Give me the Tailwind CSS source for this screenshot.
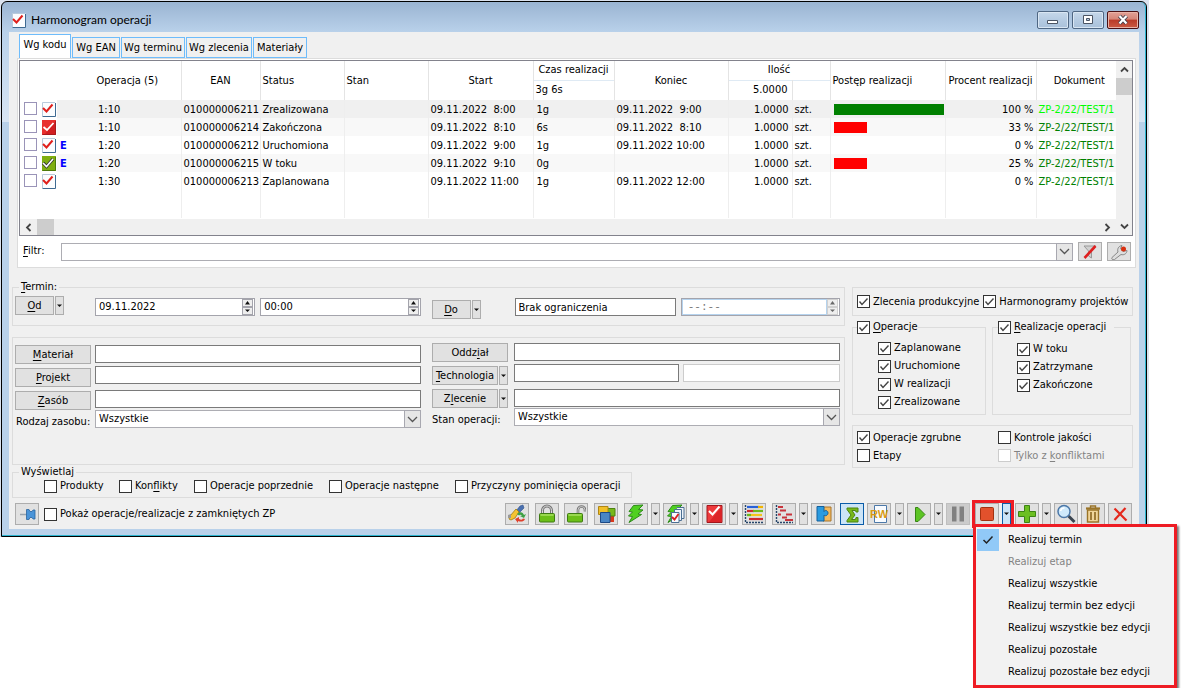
<!DOCTYPE html>
<html lang="pl">
<head>
<meta charset="utf-8">
<title>Harmonogram operacji</title>
<script src="https://cdn.jsdelivr.net/npm/@tailwindcss/browser@4"></script>
</head>
<body class="min-h-screen bg-white font-['DejaVu_Sans_Condensed','Noto_Sans',sans-serif] text-[11px] leading-[14px] text-black">
<svg class="hidden" aria-hidden="true">
  <symbol id="tick" viewBox="0 0 13 13"><path d="M2.500 6.500 5 9.500 10.500 3.500" fill="none" stroke="#444" stroke-width="1.4"/></symbol>
  <symbol id="caret" viewBox="0 0 7 4"><path d="M1 .5h5L3.500 3z" fill="#111"/></symbol>
  <symbol id="up" viewBox="0 0 7 4"><path d="M1 3.500h5L3.500 0z" fill="#111"/></symbol>
  <symbol id="chev" viewBox="0 0 11 7"><path d="M1 1l4.500 4.500L10 1" fill="none" stroke="#555" stroke-width="1.300"/></symbol>
  <symbol id="page" viewBox="0 0 14 15"><path d="M.5.500h13v14H.500z" fill="#fbfdff"/><path d="M13.500 1v13.500H.500" fill="none" stroke="#3e6a92"/><path d="M.5 14V.500H13" fill="none" stroke="#b9cbdc"/><path d="M1 6l3.500 3.500L10.500 2.500" fill="none" stroke="#e0201c" stroke-width="2"/></symbol>
  <symbol id="pagered" viewBox="0 0 14 15"><path d="M0 0h14v15H0z" fill="#e8302f"/><path d="M13.500 1v13.500H.500" fill="none" stroke="#a81a1e"/><path d="M13 2v12H3z" fill="#d11f22"/><path d="M1.500 7L5 10 11.500 3" fill="none" stroke="#fff" stroke-width="1.800"/></symbol>
  <symbol id="pagegreen" viewBox="0 0 14 15"><path d="M0 0h14v15H0z" fill="#7fae10"/><path d="M13.500 1v13.500H.500" fill="none" stroke="#4d7a0c"/><path d="M1 7l3.500 3.500L11 3" fill="none" stroke="#333" stroke-width="3.200"/><path d="M1 7l3.500 3.500L11 3" fill="none" stroke="#fff" stroke-width="1.600"/></symbol>
  <symbol id="bolt" viewBox="0 0 20 20"><path d="M7.500 1.500 17 1l-4.500 4.500 4.500.5-5 4 3.500.5L3 18.500l3.500-6-4-.5 4-4-3.500-.5z" fill="#4fd020" stroke="#2c8a18"/></symbol>
</svg>

<div class="mr-8 bg-[#dbe2ee] pt-px pl-px pr-0.5">
<main class="rounded-t-md border border-black bg-[linear-gradient(#9ab4d2,#b9d1ea_30px,#d8e5f4_120px,#b9d1ea_120px)]">
<div class="rounded-t-md border-r border-b border-[#2bb4cf] pr-1.5 pb-1.5 pl-[7px]">

  <header class="flex h-[30px] items-center pl-[3px] pt-1.5 font-[Lato,'Open_Sans',sans-serif] text-xs">
    <svg class="h-[15px] w-3.5"><use href="#page"/></svg>
    <h1 class="ml-[5px]">Harmonogram operacji</h1>
    <div class="ml-auto flex gap-[3px] pb-px">
      <button aria-label="Minimalizuj" class="grid h-[18px] w-8 place-items-center rounded-xs border border-[#4f6783] bg-linear-to-b from-[#c6d8ea] via-[#b5cbe2] to-[#a9c1da] shadow-[inset_0_0_0_1px_#d9e6f3]"><svg class="h-3 w-3"><path d="M.5 6.500h10v3H.500z" fill="#fff" stroke="#4b5463"/></svg></button>
      <button aria-label="Maksymalizuj" class="grid h-[18px] w-8 place-items-center rounded-xs border border-[#4f6783] bg-linear-to-b from-[#c6d8ea] via-[#b5cbe2] to-[#a9c1da] shadow-[inset_0_0_0_1px_#d9e6f3]"><svg class="h-3 w-3"><path d="M1.500 1.500h9v8h-9z" fill="#fff" stroke="#4b5463"/><path d="M4.500 4.500h3v2h-3z" fill="#b5cbe2" stroke="#4b5463"/></svg></button>
      <button aria-label="Zamknij" class="grid h-[18px] w-8 place-items-center rounded-xs border border-[#4a1013] bg-[linear-gradient(#e2a196,#d58577_45%,#b93a27_50%,#cb5a43)] shadow-[inset_0_0_0_1px_#e9b3a7]"><svg class="h-3 w-3"><path d="M2.500 2 9.500 9.500M9.500 2 2.500 9.500" stroke="#3f3f4c" stroke-width="4"/><path d="M2.500 2 9.500 9.500M9.500 2 2.500 9.500" stroke="#fff" stroke-width="2.200"/></svg></button>
    </div>
  </header>

  <div class="bg-[#f0f0f0] pb-1 [&_label]:flex [&_label]:items-center [&_label]:whitespace-nowrap [&_input[type=checkbox]]:size-[13px] [&_input[type=checkbox]]:appearance-none [&_input[type=checkbox]]:border [&_input[type=checkbox]]:border-[#333] [&_input[type=checkbox]]:bg-white [&_input[type=checkbox]]:disabled:border-[#ccc] [&_u]:underline-offset-2">

    <nav class="flex items-end gap-px pt-0.5 pl-2.5" role="tablist">
      <button role="tab" aria-selected="true" class="h-6 w-[52px] border border-b-0 border-[#6ebcfb] bg-white pb-1">Wg kodu</button>
      <button role="tab" class="h-[21px] w-12 border border-[#6ebcfb]">Wg EAN</button>
      <button role="tab" class="h-[21px] w-16 border border-[#6ebcfb]">Wg terminu</button>
      <button role="tab" class="h-[21px] w-[66px] border border-[#6ebcfb]">Wg zlecenia</button>
      <button role="tab" class="h-[21px] w-[54px] border border-[#6ebcfb]">Materiały</button>
    </nav>

    <section class="mr-[3px] ml-2 border border-[#dcdcdc] bg-white p-px pr-0.5 pb-1.5">
      <div class="flex border border-[#82828c]">
        <div class="min-w-0 flex-1">
          <table class="w-full table-fixed border-collapse [&_td]:overflow-hidden [&_td]:border-r [&_td]:border-[#eee] [&_td]:pt-0.5 [&_td]:whitespace-pre [&_td:has(svg)]:pt-0 [&_td:has([style])]:pt-0 [&_th]:border-r [&_th]:border-[#e4e4e4] [&_th]:font-normal">
            <colgroup><col class="w-[37px]"><col class="w-[124px]"><col class="w-[79px]"><col class="w-[84px]"><col class="w-[84px]"><col class="w-[105px]"><col class="w-[81px]"><col class="w-[114px]"><col class="w-16"><col class="w-[38px]"><col class="w-[115px]"><col class="w-[91px]"><col></colgroup>
            <thead>
              <tr class="h-[19px]">
                <th rowspan="2" colspan="2" class="pl-[54px]">Operacja (5)</th>
                <th rowspan="2">EAN</th>
                <th rowspan="2" class="pl-0.5 text-left">Status</th>
                <th rowspan="2" class="pl-0.5 text-left">Stan</th>
                <th rowspan="2">Start</th>
                <th>Czas realizacji</th>
                <th rowspan="2">Koniec</th>
                <th colspan="2">Ilość</th>
                <th rowspan="2" class="pl-0.5 text-left whitespace-nowrap">Postęp realizacji</th>
                <th rowspan="2" class="whitespace-nowrap">Procent realizacji</th>
                <th rowspan="2" class="border-r-0! pl-1.5">Dokument</th>
              </tr>
              <tr class="h-5">
                <th class="border-t border-t-[#dfeaf4]! pl-0.5 text-left">3g 6s</th>
                <th class="border-t border-t-[#dfeaf4]! pr-1 text-right">5.0000</th>
                <th class="border-t border-t-[#dfeaf4]!"></th>
              </tr>
            </thead>
            <tbody>
              <tr class="h-[18px] bg-[#f0f0f0]">
                <td class="border-r-0! bg-white"><div class="flex gap-[5px] pl-1"><input type="checkbox" aria-label="Zaznacz 010000006211" class="border-[#9a94b8]!"><svg class="h-[15px] w-3.5"><use href="#page"/></svg></div></td>
                <td class="pl-[41px]">1:10</td><td class="pl-0.5">010000006211</td><td class="pl-0.5">Zrealizowana</td><td></td><td class="pl-0.5">09.11.2022  8:00</td><td class="pl-[3px]">1g</td><td class="pl-0.5">09.11.2022  9:00</td><td class="pr-[3px] text-right">1.0000</td><td class="pl-0.5">szt.</td>
                <td class="pl-[3px]"><div class="h-[11px] bg-[#008000]" style="width:110px"></div></td><td class="pr-0.5 text-right">100 %</td><td class="border-r-0! pl-0.5 text-[#00ff00]">ZP-2/22/TEST/1</td>
              </tr>
              <tr class="h-[18px] bg-[#f8f8f8]">
                <td class="border-r-0! bg-white"><div class="flex gap-[5px] pl-1"><input type="checkbox" aria-label="Zaznacz 010000006214" class="border-[#9a94b8]!"><svg class="h-[15px] w-3.5"><use href="#pagered"/></svg></div></td>
                <td class="pl-[41px]">1:10</td><td class="pl-0.5">010000006214</td><td class="pl-0.5">Zakończona</td><td></td><td class="pl-0.5">09.11.2022  8:10</td><td class="pl-[3px]">6s</td><td class="pl-0.5">09.11.2022  8:10</td><td class="pr-[3px] text-right">1.0000</td><td class="pl-0.5">szt.</td>
                <td class="pl-[3px]"><div class="h-[11px] bg-[#ff0000]" style="width:33px"></div></td><td class="pr-0.5 text-right">33 %</td><td class="border-r-0! pl-0.5 text-[#008000]">ZP-2/22/TEST/1</td>
              </tr>
              <tr class="h-[18px]">
                <td class="border-r-0! bg-white"><div class="flex gap-[5px] pl-1"><input type="checkbox" aria-label="Zaznacz 010000006212" class="border-[#9a94b8]!"><svg class="h-[15px] w-3.5"><use href="#page"/></svg></div></td>
                <td class="pl-[3px]"><div class="flex"><b class="w-[38px] text-[#0000ff]">E</b>1:20</div></td><td class="pl-0.5">010000006212</td><td class="pl-0.5">Uruchomiona</td><td></td><td class="pl-0.5">09.11.2022  9:00</td><td class="pl-[3px]">1g</td><td class="pl-0.5">09.11.2022 10:00</td><td class="pr-[3px] text-right">1.0000</td><td class="pl-0.5">szt.</td>
                <td></td><td class="pr-0.5 text-right">0 %</td><td class="border-r-0! pl-0.5 text-[#008000]">ZP-2/22/TEST/1</td>
              </tr>
              <tr class="h-[18px] bg-[#f8f8f8]">
                <td class="border-r-0! bg-white"><div class="flex gap-[5px] pl-1"><input type="checkbox" aria-label="Zaznacz 010000006215" class="border-[#9a94b8]!"><svg class="h-[15px] w-3.5"><use href="#pagegreen"/></svg></div></td>
                <td class="pl-[3px]"><div class="flex"><b class="w-[38px] text-[#0000ff]">E</b>1:20</div></td><td class="pl-0.5">010000006215</td><td class="pl-0.5">W toku</td><td></td><td class="pl-0.5">09.11.2022  9:10</td><td class="pl-[3px]">0g</td><td class="pl-0.5"></td><td class="pr-[3px] text-right">1.0000</td><td class="pl-0.5">szt.</td>
                <td class="pl-[3px]"><div class="h-[11px] bg-[#ff0000]" style="width:33px"></div></td><td class="pr-0.5 text-right">25 %</td><td class="border-r-0! pl-0.5 text-[#008000]">ZP-2/22/TEST/1</td>
              </tr>
              <tr class="h-[18px]">
                <td class="border-r-0! bg-white"><div class="flex gap-[5px] pl-1"><input type="checkbox" aria-label="Zaznacz 010000006213" class="border-[#9a94b8]!"><svg class="h-[15px] w-3.5"><use href="#page"/></svg></div></td>
                <td class="pl-[41px]">1:30</td><td class="pl-0.5">010000006213</td><td class="pl-0.5">Zaplanowana</td><td></td><td class="pl-0.5">09.11.2022 11:00</td><td class="pl-[3px]">1g</td><td class="pl-0.5">09.11.2022 12:00</td><td class="pr-[3px] text-right">1.0000</td><td class="pl-0.5">szt.</td>
                <td></td><td class="pr-0.5 text-right">0 %</td><td class="border-r-0! pl-0.5 text-[#008000]">ZP-2/22/TEST/1</td>
              </tr>
              <tr class="h-7"><td class="border-r-0!"></td><td></td><td></td><td></td><td></td><td></td><td></td><td></td><td></td><td></td><td></td><td></td><td class="border-r-0!"></td></tr>
            </tbody>
          </table>
          <div class="mt-px flex h-4 items-stretch justify-between bg-[#f0f0f0]">
            <div class="flex">
              <button aria-label="Przewiń w lewo" class="grid w-[17px] place-items-center"><svg class="h-[7px] w-[11px] rotate-90" viewBox="0 0 11 7"><path d="M2 1.500 5.500 5 9 1.500" fill="none" stroke="#444" stroke-width="1.800"/></svg></button>
              <div class="w-[17px] bg-[#cdcdcd]"></div>
            </div>
            <button aria-label="Przewiń w prawo" class="grid w-[17px] place-items-center"><svg class="h-[7px] w-[11px] -rotate-90" viewBox="0 0 11 7"><path d="M2 1.500 5.500 5 9 1.500" fill="none" stroke="#444" stroke-width="1.800"/></svg></button>
          </div>
        </div>
        <div class="flex w-4 flex-col bg-[#f0f0f0]">
          <button aria-label="Przewiń w górę" class="grid h-[17px] place-items-center"><svg class="h-[7px] w-[11px] rotate-180" viewBox="0 0 11 7"><path d="M2 1.500 5.500 5 9 1.500" fill="none" stroke="#444" stroke-width="1.800"/></svg></button>
          <div class="h-[17px] bg-[#cdcdcd]"></div>
          <button aria-label="Przewiń w dół" class="mt-auto grid h-[17px] place-items-center"><svg class="h-[7px] w-[11px]" viewBox="0 0 11 7"><path d="M2 1.500 5.500 5 9 1.500" fill="none" stroke="#444" stroke-width="1.800"/></svg></button>
        </div>
      </div>

      <div class="mt-1.5 flex items-center pr-0.5 pl-1">
        <label for="filtr" class="w-[38px] pb-0.5"><span><u>F</u>iltr:</span></label>
        <div class="grid flex-1">
          <select id="filtr" class="col-start-1 row-start-1 h-[18px] w-full appearance-none border border-[#adadb3] bg-white"><option></option></select>
          <span class="pointer-events-none col-start-1 row-start-1 grid w-[17px] place-items-center justify-self-end border border-[#a8a8b0] bg-[#e6e6e6]"><svg class="h-[7px] w-[11px]"><use href="#chev"/></svg></span>
        </div>
        <button aria-label="Wyczyść filtr" class="ml-[5px] grid h-[19px] w-6 place-items-center border border-[#adadad] bg-[#e1e1e1]"><svg class="h-4 w-5" viewBox="0 0 20 16"><path d="M4 2h12l-4.500 5v7l-3-2V7z" fill="#d0d0d0" stroke="#999"/><path d="M15.500 2 4.500 14" stroke="#df2020" stroke-width="2.600"/></svg></button>
        <button aria-label="Kreator filtra" class="ml-[5px] grid h-[19px] w-6 place-items-center border border-[#adadad] bg-[#e1e1e1]"><svg class="h-4 w-5" viewBox="0 0 20 16"><path d="M3 13.500 9 8C8 5 9.500 2 13 1.500L11.500 4.500 14 7.500l4-1c0 3-3 5-6 4l-6.500 5c-2 .5-3.500-.5-2.500-2z" fill="#ddd" stroke="#888"/><circle cx="14.500" cy="5" r="2.500" fill="#d83010"/></svg></button>
      </div>
    </section>

    <div class="mt-3 flex items-start gap-[7px] pr-1.5 pl-[3px]">
      <div class="min-w-0 flex-1">
        <fieldset class="border border-[#dcdcdc] pb-1.5">
          <legend class="ml-1.5 px-0.5"><u>T</u>ermin:</legend>
          <div class="flex items-start pt-0.5 pr-1 pl-0.5">
            <div class="flex w-20 gap-px">
              <button class="h-[19px] w-[39px] border border-[#adadad] bg-[#e1e1e1]"><u>O</u>d</button>
              <button aria-label="Opcje Od" class="grid h-[19px] w-[9px] place-items-center border border-[#adadad] bg-[#e1e1e1]"><svg class="h-1 w-[7px]"><use href="#caret"/></svg></button>
            </div>
            <div class="mt-0.5 flex flex-1 gap-[5px]">
              <div class="flex h-[18px] flex-1 border border-[#a4a4ac] bg-white pr-px">
                <input aria-label="Data od" value="09.11.2022" class="w-0 flex-1 pl-[3px] outline-none">
                <div class="flex w-[11px] flex-col"><button aria-label="Więcej" class="grid h-2 place-items-center border border-[#a4a4ac] bg-[#eee]"><svg class="h-1 w-[7px]"><use href="#up"/></svg></button><button aria-label="Mniej" class="grid h-2 place-items-center border border-[#a4a4ac] bg-[#eee]"><svg class="h-1 w-[7px]"><use href="#caret"/></svg></button></div>
              </div>
              <div class="flex h-[18px] flex-1 border border-[#a4a4ac] bg-white pr-px">
                <input aria-label="Godzina od" value="00:00" class="w-0 flex-1 pl-[3px] outline-none">
                <div class="flex w-[11px] flex-col"><button aria-label="Więcej" class="grid h-2 place-items-center border border-[#a4a4ac] bg-[#eee]"><svg class="h-1 w-[7px]"><use href="#up"/></svg></button><button aria-label="Mniej" class="grid h-2 place-items-center border border-[#a4a4ac] bg-[#eee]"><svg class="h-1 w-[7px]"><use href="#caret"/></svg></button></div>
              </div>
            </div>
            <div class="mt-1 ml-[11px] flex w-[83px] gap-px">
              <button class="h-[19px] w-[39px] border border-[#adadad] bg-[#e1e1e1]"><u>D</u>o</button>
              <button aria-label="Opcje Do" class="grid h-[19px] w-[9px] place-items-center border border-[#adadad] bg-[#e1e1e1]"><svg class="h-1 w-[7px]"><use href="#caret"/></svg></button>
            </div>
            <div class="mt-0.5 flex flex-1 gap-[5px]">
              <input aria-label="Data do" value="Brak ograniczenia" class="h-[18px] w-0 flex-1 border border-[#7a7a7a] bg-white pl-[3px]">
              <div class="flex h-[18px] flex-1 border border-[#a4a4ac] bg-white pr-px">
                <input aria-label="Godzina do" value="--:--" class="w-0 flex-1 border border-[#b5d3ee] pl-[5px] font-['Liberation_Mono',monospace] text-[#777] outline-none">
                <div class="flex w-[11px] flex-col"><button aria-label="Więcej" class="grid h-2 place-items-center border border-[#d0d0d0] bg-[#eee]"><svg class="h-1 w-[7px] opacity-60"><use href="#up"/></svg></button><button aria-label="Mniej" class="grid h-2 place-items-center border border-[#d0d0d0] bg-[#eee]"><svg class="h-1 w-[7px] opacity-60"><use href="#caret"/></svg></button></div>
              </div>
            </div>
          </div>
        </fieldset>

        <div class="mt-[11px] flex h-32 items-start border border-[#dcdcdc] pt-[5px] pr-1 pl-0.5 [&_input]:h-[18px] [&_input]:border [&_input]:border-[#7a7a7a] [&_input]:bg-white">
          <div class="mt-0.5 flex w-20 flex-col gap-1 pr-1">
            <button class="h-[19px] border border-[#adadad] bg-[#e1e1e1]"><u>M</u>ateriał</button>
            <button class="h-[19px] border border-[#adadad] bg-[#e1e1e1]"><u>P</u>rojekt</button>
            <button class="h-[19px] border border-[#adadad] bg-[#e1e1e1]"><u>Z</u>asób</button>
            <label for="rodzaj" class="mt-px ml-px">Rodzaj zasobu:</label>
          </div>
          <div class="mt-0.5 flex flex-1 flex-col">
            <input aria-label="Materiał">
            <input aria-label="Projekt" class="mt-[3px]">
            <input aria-label="Zasób" class="mt-1.5">
            <div class="mt-0.5 grid">
              <select id="rodzaj" class="col-start-1 row-start-1 h-[18px] appearance-none border border-[#adadb3] bg-white pl-[3px]"><option>Wszystkie</option></select>
              <span class="pointer-events-none col-start-1 row-start-1 grid w-[17px] place-items-center justify-self-end border border-[#a8a8b0] bg-[#e6e6e6]"><svg class="h-[7px] w-[11px]"><use href="#chev"/></svg></span>
            </div>
          </div>
          <div class="ml-[11px] flex w-[82px] flex-col gap-1 pr-1.5">
            <button class="h-[19px] border border-[#adadad] bg-[#e1e1e1]">Oddz<u>i</u>ał</button>
            <div class="flex gap-px"><button class="h-[19px] flex-1 border border-[#adadad] bg-[#e1e1e1]"><u>T</u>echnologia</button><button aria-label="Opcje technologii" class="grid h-[19px] w-[9px] place-items-center border border-[#adadad] bg-[#e1e1e1]"><svg class="h-1 w-[7px]"><use href="#caret"/></svg></button></div>
            <div class="flex gap-px"><button class="h-[19px] flex-1 border border-[#adadad] bg-[#e1e1e1]">Z<u>l</u>ecenie</button><button aria-label="Opcje zlecenia" class="grid h-[19px] w-[9px] place-items-center border border-[#adadad] bg-[#e1e1e1]"><svg class="h-1 w-[7px]"><use href="#caret"/></svg></button></div>
            <label for="stan" class="mt-px">Stan operacji:</label>
          </div>
          <div class="flex flex-1 flex-col">
            <input aria-label="Oddział">
            <div class="mt-[3px] flex gap-1"><input aria-label="Technologia" class="w-0 flex-[21]"><input aria-label="Nazwa technologii" disabled class="w-0 flex-[20] border-[#ccc]!"></div>
            <input aria-label="Zlecenie" class="mt-[7px]">
            <div class="mt-px grid">
              <select id="stan" class="col-start-1 row-start-1 h-[18px] appearance-none border border-[#adadb3] bg-white pl-[3px]"><option>Wszystkie</option></select>
              <span class="pointer-events-none col-start-1 row-start-1 grid w-[17px] place-items-center justify-self-end border border-[#a8a8b0] bg-[#e6e6e6]"><svg class="h-[7px] w-[11px]"><use href="#chev"/></svg></span>
            </div>
          </div>
        </div>
      </div>

      <div class="mt-[7px] w-[281px] [&_label]:h-[18px] [&_label]:gap-[3px]">
        <div class="flex h-[29px] items-center gap-1 border border-[#dcdcdc] pl-1">
          <label><span class="grid"><input type="checkbox" checked class="peer col-start-1 row-start-1"><svg class="pointer-events-none invisible col-start-1 row-start-1 size-[13px] peer-checked:visible"><use href="#tick"/></svg></span>Zlecenia produkcyjne</label>
          <label><span class="grid"><input type="checkbox" checked class="peer col-start-1 row-start-1"><svg class="pointer-events-none invisible col-start-1 row-start-1 size-[13px] peer-checked:visible"><use href="#tick"/></svg></span>Harmonogramy projektów</label>
        </div>
        <div class="mt-0.5 flex gap-1.5 pr-0.5">
          <fieldset class="h-[97px] w-[134px] border border-[#dcdcdc]">
            <legend class="ml-1"><label><span class="grid"><input type="checkbox" checked class="peer col-start-1 row-start-1"><svg class="pointer-events-none invisible col-start-1 row-start-1 size-[13px] peer-checked:visible"><use href="#tick"/></svg></span><span><u>O</u>peracje</span></label></legend>
            <div class="flex flex-col pt-[3px] pl-[25px]">
              <label><span class="grid"><input type="checkbox" checked class="peer col-start-1 row-start-1"><svg class="pointer-events-none invisible col-start-1 row-start-1 size-[13px] peer-checked:visible"><use href="#tick"/></svg></span>Zaplanowane</label>
              <label><span class="grid"><input type="checkbox" checked class="peer col-start-1 row-start-1"><svg class="pointer-events-none invisible col-start-1 row-start-1 size-[13px] peer-checked:visible"><use href="#tick"/></svg></span>Uruchomione</label>
              <label><span class="grid"><input type="checkbox" checked class="peer col-start-1 row-start-1"><svg class="pointer-events-none invisible col-start-1 row-start-1 size-[13px] peer-checked:visible"><use href="#tick"/></svg></span>W realizacji</label>
              <label><span class="grid"><input type="checkbox" checked class="peer col-start-1 row-start-1"><svg class="pointer-events-none invisible col-start-1 row-start-1 size-[13px] peer-checked:visible"><use href="#tick"/></svg></span>Zrealizowane</label>
            </div>
          </fieldset>
          <fieldset class="h-[97px] flex-1 border border-[#dcdcdc]">
            <legend class="ml-[5px] pr-2"><label><span class="grid"><input type="checkbox" checked class="peer col-start-1 row-start-1"><svg class="pointer-events-none invisible col-start-1 row-start-1 size-[13px] peer-checked:visible"><use href="#tick"/></svg></span><span><u>R</u>ealizacje operacji</span></label></legend>
            <div class="flex flex-col pt-1 pl-6">
              <label><span class="grid"><input type="checkbox" checked class="peer col-start-1 row-start-1"><svg class="pointer-events-none invisible col-start-1 row-start-1 size-[13px] peer-checked:visible"><use href="#tick"/></svg></span>W toku</label>
              <label><span class="grid"><input type="checkbox" checked class="peer col-start-1 row-start-1"><svg class="pointer-events-none invisible col-start-1 row-start-1 size-[13px] peer-checked:visible"><use href="#tick"/></svg></span>Zatrzymane</label>
              <label><span class="grid"><input type="checkbox" checked class="peer col-start-1 row-start-1"><svg class="pointer-events-none invisible col-start-1 row-start-1 size-[13px] peer-checked:visible"><use href="#tick"/></svg></span>Zakończone</label>
            </div>
          </fieldset>
        </div>
        <div class="mt-2.5 grid h-[43px] grid-cols-[141px_1fr] content-center border border-[#dcdcdc] pl-1">
          <label><span class="grid"><input type="checkbox" checked class="peer col-start-1 row-start-1"><svg class="pointer-events-none invisible col-start-1 row-start-1 size-[13px] peer-checked:visible"><use href="#tick"/></svg></span>Operacje zgrubne</label>
          <label><span class="grid"><input type="checkbox"></span>Kontrole jakości</label>
          <label><span class="grid"><input type="checkbox"></span>Etapy</label>
          <label class="text-[#838383]"><span class="grid"><input type="checkbox" disabled></span><span>Tylko z <u>k</u>onfliktami</span></label>
        </div>
      </div>
    </div>

    <fieldset class="-mt-[3px] ml-[3px] h-[33px] w-[620px] border border-[#dcdcdc]">
      <legend class="ml-1.5 px-0.5">Wyświetlaj</legend>
      <div class="grid grid-cols-[75px_75px_135px_126px_1fr] pl-[31px] [&_label]:gap-[3px]">
        <label><input type="checkbox">Produkty</label>
        <label><input type="checkbox"><span>Kon<u>f</u>likty</span></label>
        <label><input type="checkbox">Operacje poprzednie</label>
        <label><input type="checkbox">Operacje następne</label>
        <label><input type="checkbox">Przyczyny pominięcia operacji</label>
      </div>
    </fieldset>

    <footer class="mt-[5px] flex items-center gap-[3px] pr-[7px] pl-1.5 [&_button]:grid [&_button]:h-[22px] [&_button]:shrink-0 [&_button]:place-items-center [&_button]:border [&_button]:border-[#adadad] [&_button]:bg-[#e1e1e1]">
      <button aria-label="Przypnij" class="w-6"><svg class="size-5" viewBox="0 0 20 20"><path d="M3 10.500h7" stroke="#9aa4ae" stroke-width="1.500"/><path d="M9.500 5.500h2.500l1 2h2l1-1.500h2v9h-2l-1-1.500h-2l-1 2H9.500z" fill="#4a94d8" stroke="#2a64a0" stroke-width=".8"/></svg></button>
      <label class="ml-0.5 gap-[3px]"><input type="checkbox">Pokaż operacje/realizacje z zamkniętych ZP</label>
      <button aria-label="Przelicz" class="ml-auto w-6"><svg class="size-5" viewBox="0 0 20 20"><path d="M9 7l4-5 3-1 1 3-5 5z" fill="#4a70b0" stroke="#31528c" stroke-width=".6"/><path d="M3 12l6-7 3 3-4 6-4 2-2-1z" fill="#f5c332" stroke="#a07c10" stroke-width=".8"/><path d="M1 11l3-1v4H1z" fill="#999"/><path d="M10 10c3-3 6-2 7 1l2-1-2 4-4-2 2-.5c-1-1-2-1-3 0z" fill="#3ea044"/><path d="M18 15c-1 3-5 3-7 2v2l-3-4 4-2v2c2 1 3 1 4-.5z" fill="#e0402c"/></svg></button>
      <button aria-label="Zablokuj" class="ml-[3px] w-6"><svg class="size-5" viewBox="0 0 20 20"><path d="M5.500 10V6.500a4.500 4.500 0 0 1 9 0V10" fill="none" stroke="#777" stroke-width="3"/><path d="M5.500 10V6.500a4.500 4.500 0 0 1 9 0V10" fill="none" stroke="#ddd" stroke-width="1"/><rect x="2.500" y="9.500" width="15" height="8.500" rx="1" fill="#6cbf18" stroke="#3d7a12"/><path d="M3.500 11h13" stroke="#a8e060" stroke-width="1.500"/></svg></button>
      <button aria-label="Odblokuj" class="ml-0.5 w-6"><svg class="size-5" viewBox="0 0 20 20"><path d="M12 10V6a3.500 3.500 0 0 1 7 0v1.500" fill="none" stroke="#777" stroke-width="2.600"/><path d="M12 10V6a3.500 3.500 0 0 1 7 0v1.500" fill="none" stroke="#ddd" stroke-width=".8"/><rect x="1.500" y="9.500" width="15" height="8.500" rx="1" fill="#6cbf18" stroke="#3d7a12"/><path d="M2.500 11h13" stroke="#a8e060" stroke-width="1.500"/></svg></button>
      <button aria-label="Moduły" class="ml-[3px] w-6"><svg class="size-5" viewBox="0 0 20 20"><path d="M13 11h5v7h-5z" fill="#d8391c"/><path d="M10.500 4.500h8.500v7.500h-8.500z" fill="#76b81a" stroke="#4d8410"/><path d="M2.500 2.500h9.500v8H2.500z" fill="#f0bf28" stroke="#b08614"/><path d="M4.500 8.500h9.500v10H4.500z" fill="#4a86c4" stroke="#1e4a86"/></svg></button>
      <button aria-label="Uruchom" class="ml-[3px] w-6"><svg class="size-5"><use href="#bolt"/></svg></button>
      <button aria-label="Opcje uruchamiania" class="w-[9px]"><svg class="h-1 w-[7px]"><use href="#caret"/></svg></button>
      <button aria-label="Uruchom zaznaczone" class="w-6"><svg class="size-5" viewBox="0 0 20 20"><use href="#bolt" width="20" height="20"/><path d="M11.500 3.500H19v11h-2" fill="#eef4fa" stroke="#4c6f92"/><path d="M9.500 5.500h7v11h-7z" fill="#eef4fa" stroke="#4c6f92"/><path d="M6.500 8.500h7.500v10H6.500z" fill="#f8fbff" stroke="#4c6f92"/><path d="M7 13l2.500 2.500L13.500 10" fill="none" stroke="#d82020" stroke-width="1.800"/></svg></button>
      <button aria-label="Opcje uruchamiania zaznaczonych" class="w-[9px]"><svg class="h-1 w-[7px]"><use href="#caret"/></svg></button>
      <button aria-label="Zakończ" class="w-6"><svg class="size-5" viewBox="0 0 20 20"><path d="M3 1.500h15v17H3z" fill="#ee3a3c" stroke="#a2161c"/><path d="M17.500 3v15H5z" fill="#dc2428"/><path d="M5 7l3.500 3.500L15.500 2.500" fill="none" stroke="#fff" stroke-width="2"/></svg></button>
      <button aria-label="Opcje zakończenia" class="w-[9px]"><svg class="h-1 w-[7px]"><use href="#caret"/></svg></button>
      <button aria-label="Wykres Gantta" class="ml-px w-6"><svg class="size-5" viewBox="0 0 20 20"><path d="M1.500 1v17.500H19" fill="none" stroke="#27466a" stroke-width="1.400" stroke-dasharray="2 1"/><path d="M3 3h12" stroke="#2a62d8" stroke-width="2.200"/><path d="M14 3h5" stroke="#f0b400" stroke-width="2.200"/><path d="M3 7h7" stroke="#cc2a30" stroke-width="2.200"/><path d="M9 7h10" stroke="#6cb81c" stroke-width="2.200"/><path d="M3 11h15" stroke="#f4c41a" stroke-width="2.200"/><path d="M3 11h4" stroke="#6cb81c" stroke-width="2.200"/><path d="M5 15h14" stroke="#cc2a30" stroke-width="2.200"/></svg></button>
      <button aria-label="Harmonogram" class="ml-[3px] w-6"><svg class="size-5" viewBox="0 0 20 20"><path d="M2.500 1v17.500H19" fill="none" stroke="#27466a" stroke-width="1.400" stroke-dasharray="2 1"/><path d="M4 3h5M6 6.500h6M4 10.500h3M12 10.500h6M8 13.500h5M11 16h8" stroke="#c8343c" stroke-width="2.200"/></svg></button>
      <button aria-label="Opcje harmonogramu" class="w-[9px]"><svg class="h-1 w-[7px]"><use href="#caret"/></svg></button>
      <button aria-label="Powiąż" class="w-6"><svg class="size-5" viewBox="0 0 20 20"><path d="M10 3h8v14h-8z" fill="#f3b95c" stroke="#a8742a"/><path d="M4 2.500h7v5c1-2 4-1 4 1.500s-3 3.500-4 2v6H4z" fill="#2a9be0" stroke="#14609c"/></svg></button>
      <button aria-label="Suma" aria-pressed="true" class="ml-0.5 w-6 border-[#0a5ca8]! bg-[#cce4f7]!"><svg class="size-5" viewBox="0 0 20 20"><path d="M5 4h11v4h-2l-.5-1.500H10L13 11l-3.500 4.500h4L14 13.500h2V18H5v-1.500L9 11 5 5.500z" fill="#76b81a" stroke="#4d8410"/></svg></button>
      <button aria-label="Dokument RW" class="w-6"><span class="grid size-5 grid-cols-[20px] place-items-center"><svg class="col-start-1 row-start-1 size-5" viewBox="0 0 20 20"><path d="M5.500 1.500h12v17h-12z" fill="#f8fbff" stroke="#4c78a8"/></svg><b class="col-start-1 row-start-1 font-['Liberation_Sans',sans-serif] text-[11px] text-[#d99a10]">RW</b></span></button>
      <button aria-label="Opcje RW" class="ml-px w-[9px]"><svg class="h-1 w-[7px]"><use href="#caret"/></svg></button>
      <button aria-label="Start" class="w-6"><svg class="size-5" viewBox="0 0 20 20"><path d="M6.500 3.500h2.500L16 10.500 9 17.500H6.500z" fill="#5cc424" stroke="#378414"/></svg></button>
      <button aria-label="Opcje startu" class="w-[9px]"><svg class="h-1 w-[7px]"><use href="#caret"/></svg></button>
      <button aria-label="Pauza" disabled class="w-6 border-[#bfbfbf]! bg-[#ccc]!"><svg class="size-5" viewBox="0 0 20 20"><path d="M4 2.500h4.500v15H4zM11.500 2.500H16v15h-4.500z" fill="#818181"/></svg></button>

      <div class="relative ml-0.5 flex gap-[3px]">
        <button aria-label="Realizuj" class="w-6"><svg class="size-5" viewBox="0 0 20 20"><rect x="3.500" y="3.500" width="13" height="13" rx="1" fill="#e2512c" stroke="#a3310f"/></svg></button>
        <button aria-label="Opcje realizacji" aria-expanded="true" class="w-[9px] border-[#0a5ca8]! bg-[#cce4f7]!"><svg class="h-1 w-[7px]"><use href="#caret"/></svg></button>
        <div class="pointer-events-none absolute -inset-[3px] border-[3px] border-[#ee1c24]"></div>
        <ul role="menu" class="absolute top-[21px] -left-0.5 z-10 w-[204px] border-[3px] border-[#ee1c24] bg-[#f2f2f2] py-0.5 pl-px shadow-[2px_2px_2px_#777] [&_li]:flex [&_li]:h-[22px] [&_li]:items-center [&_li]:pl-[31px] [&_li]:whitespace-nowrap">
          <li role="menuitemcheckbox" aria-checked="true" class="pl-0!"><span class="mr-[9px] grid size-[22px] place-items-center bg-[#91c9f7]"><svg class="size-3.5" viewBox="0 0 14 14"><path d="M2.500 7l3 3L11.500 3.500" fill="none" stroke="#222" stroke-width="1.500"/></svg></span>Realizuj termin</li>
          <li role="menuitem" aria-disabled="true" class="text-[#838383]">Realizuj etap</li>
          <li role="menuitem">Realizuj wszystkie</li>
          <li role="menuitem">Realizuj termin bez edycji</li>
          <li role="menuitem">Realizuj wszystkie bez edycji</li>
          <li role="menuitem">Realizuj pozostałe</li>
          <li role="menuitem">Realizuj pozostałe bez edycji</li>
        </ul>
      </div>

      <button aria-label="Dodaj" class="ml-px w-6"><svg class="size-5" viewBox="0 0 20 20"><path d="M7.500 1.500h5v6h6v5h-6v6h-5v-6h-6v-5h6z" fill="#6cbf22" stroke="#3d8414"/></svg></button>
      <button aria-label="Opcje dodawania" class="w-[9px]"><svg class="h-1 w-[7px]"><use href="#caret"/></svg></button>
      <button aria-label="Podgląd" class="w-6"><svg class="size-5" viewBox="0 0 20 20"><path d="M12.500 12l6 6" stroke="#3a4450" stroke-width="3"/><circle cx="8" cy="7.500" r="6" fill="#cfe9fb" stroke="#4c78a8" stroke-width="1.500"/><path d="M4.500 7a4 4 0 0 1 4-3" fill="none" stroke="#fff" stroke-width="1.500"/></svg></button>
      <button aria-label="Usuń" class="w-6"><svg class="size-5" viewBox="0 0 20 20"><path d="M4.500 6h11v12h-11z" fill="#f0d59a" stroke="#9a7428" stroke-width="1.400"/><path d="M3 4.500h14" stroke="#9a7428" stroke-width="2.200"/><path d="M7.500 4V2h5v2" fill="none" stroke="#9a7428" stroke-width="1.400"/><path d="M8 8v8M12 8v8" stroke="#8a6420" stroke-width="1.600"/></svg></button>
      <button aria-label="Zamknij okno" class="w-6"><svg class="size-5" viewBox="0 0 20 20"><path d="M4.500 4.500 16.500 16.500M15.500 4 4.500 16" stroke="#e4281c" stroke-width="2.200"/></svg></button>
    </footer>
  </div>
</div>
</main>
</div>
</body>
</html>
